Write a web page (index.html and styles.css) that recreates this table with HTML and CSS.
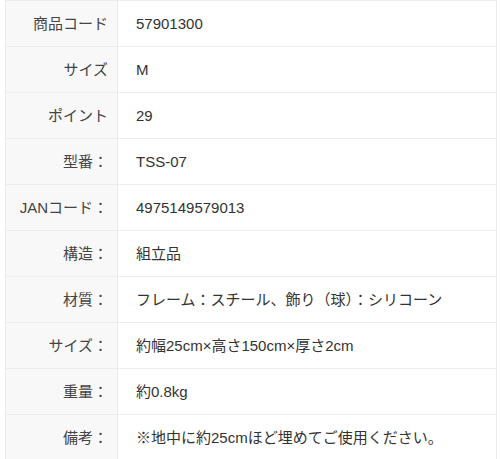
FILE: index.html
```html
<!DOCTYPE html>
<html lang="ja">
<head>
<meta charset="utf-8">
<link rel="stylesheet" href="styles.css">
</head>
<body>
<table class="spec">
<tr><th>商品コード</th><td>57901300</td></tr>
<tr><th>サイズ</th><td>M</td></tr>
<tr><th>ポイント</th><td>29</td></tr>
<tr><th>型番：</th><td>TSS-07</td></tr>
<tr><th>JANコード：</th><td>4975149579013</td></tr>
<tr><th>構造：</th><td>組立品</td></tr>
<tr><th>材質：</th><td>フレーム：スチール、飾り（球）：シリコーン</td></tr>
<tr><th>サイズ：</th><td>約幅25cm×高さ150cm×厚さ2cm</td></tr>
<tr><th>重量：</th><td>約0.8kg</td></tr>
<tr><th>備考：</th><td>※地中に約25cmほど埋めてご使用ください。</td></tr>
</table>
</body>
</html>
```
FILE: styles.css
```css
html, body {
  margin: 0;
  padding: 0;
  background: #fff;
}
body {
  padding: 0 3px 0 5px;
  font-family: "Liberation Sans", "Noto Sans CJK JP", sans-serif;
  font-size: 15px;
  color: #333;
}
.spec {
  width: 492px;
  border-collapse: collapse;
  border: 1px solid #ececec;
  table-layout: fixed;
}
.spec tr {
  height: 46px;
}
.spec th,
.spec td {
  border-top: 1px solid #ececec;
  border-bottom: 1px solid #ececec;
  padding: 0;
  vertical-align: middle;
  line-height: 20px;
  white-space: nowrap;
}
.spec th {
  width: 102px;
  padding-right: 9px;
  text-align: right;
  font-weight: normal;
  color: #444;
  background: #f8f8f8;
  border-right: 1px solid #ececec;
}
.spec td {
  padding-left: 18px;
  color: #333;
}
```
